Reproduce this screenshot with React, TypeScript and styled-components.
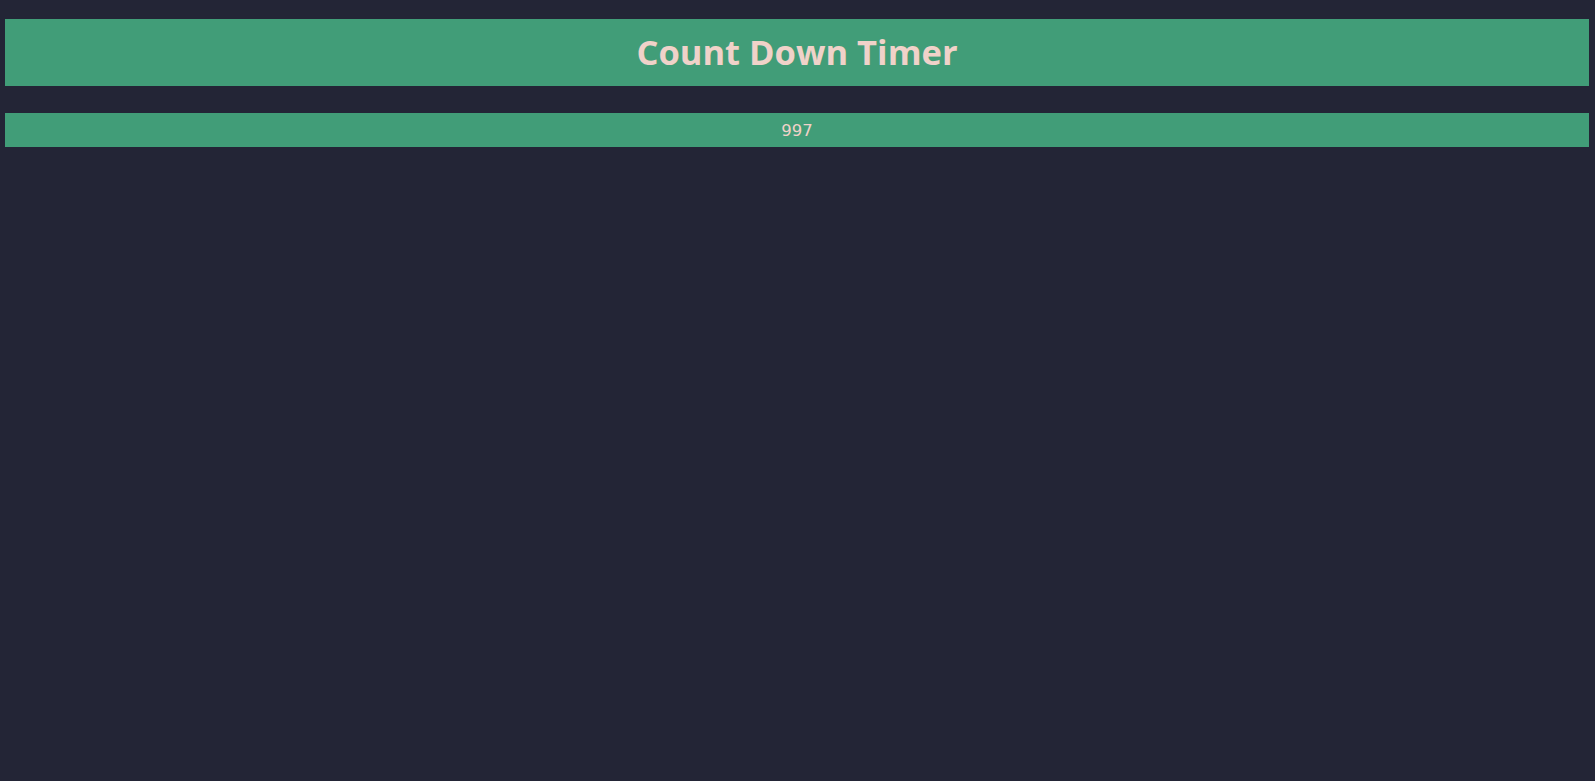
import React from "react";
import styled, { createGlobalStyle } from "styled-components";

const Global = createGlobalStyle`
  html, body { margin: 0; padding: 0; background: #232536; }
  body { font-family: "DejaVu Sans", sans-serif; }
`;

const Page = styled.div`
  display: flex;
  flex-direction: column;
  gap: 27px;
  padding: 19px 6px 0 5px;
  min-height: 781px;
  box-sizing: border-box;
  background: #232536;
`;

const Header = styled.header`
  height: 67px;
  display: flex;
  align-items: center;
  justify-content: center;
  background: #419d78;
`;

const Title = styled.h1`
  margin: 0 0 2px;
  font-family: "Open Sans", sans-serif;
  font-weight: 700;
  font-size: 34.5px;
  color: #f0d2c9;
`;

const Counter = styled.div`
  height: 34px;
  display: flex;
  align-items: center;
  justify-content: center;
  background: #419d78;
  color: #f0d2c9;
  font-family: "DejaVu Sans", sans-serif;
  font-size: 16.5px;
`;

export default function App() {
  return (
    <>
      <Global />
      <Page>
        <Header>
          <Title>Count Down Timer</Title>
        </Header>
        <Counter>997</Counter>
      </Page>
    </>
  );
}
